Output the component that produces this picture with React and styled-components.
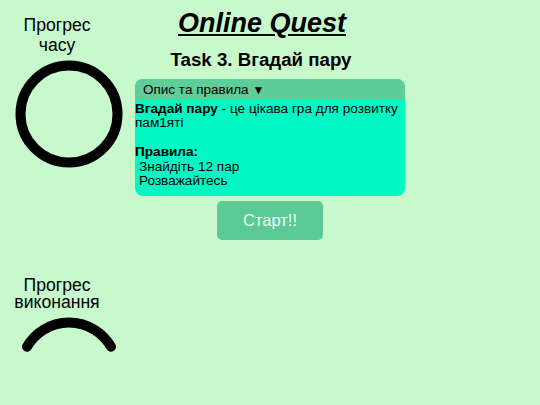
import React from "react"
import styled, { createGlobalStyle } from "styled-components"

const GlobalStyle = createGlobalStyle`
  html, body {
    margin: 0;
    padding: 0;
    background: #c8f9cc;
    font-family: "Liberation Sans", Arial, sans-serif;
    color: #000;
  }
`

const Page = styled.div`
  width: 540px;
  height: 405px;
  overflow: hidden;
  display: grid;
  grid-template-columns: 135px 270px 1fr;
`

const Sidebar = styled.div`
  display: flex;
  flex-direction: column;
`

const GaugeLabel = styled.div`
  width: 114px;
  margin-top: ${props => props.top || "0px"};
  text-align: center;
  font-size: 17.6px;
  line-height: ${props => props.lh || "20px"};
`

const GaugeSvg = styled.svg`
  display: block;
  margin-left: 15px;
  margin-top: ${props => props.top || "0px"};
`

const Main = styled.div`
  display: flex;
  flex-direction: column;
  align-items: center;
`

const Title = styled.h1`
  margin: 8px 16px 0 0;
  font-size: 27px;
  line-height: 31px;
  font-weight: bold;
  font-style: italic;
  text-decoration: underline;
`

const Subtitle = styled.h3`
  margin: 10px 18px 0 0;
  font-size: 18.7px;
  line-height: 22px;
  font-weight: bold;
`

const Rules = styled.div`
  width: 270px;
  margin-top: 8px;
  border-radius: 8px;
  overflow: hidden;
  background: #03f7c3;
`

const RulesHeader = styled.div`
  height: 21px;
  padding-left: 8px;
  display: flex;
  align-items: center;
  gap: 4px;
  background: #5fcd99;
  font-size: 13.5px;
`

const Arrow = styled.span`
  font-size: 12px;
`

const RulesBody = styled.div`
  padding: 2px 0 8px 0;
  font-size: 13.6px;
  line-height: 14.4px;
`

const Line = styled.div`
  min-height: 14.4px;
  white-space: nowrap;
  padding-left: ${props => (props.indent ? "4px" : "0")};
`

const StartButton = styled.button`
  margin-top: 5px;
  width: 106px;
  height: 39px;
  border: none;
  border-radius: 5px;
  background: #5bca97;
  color: #f2fff7;
  font-family: "Liberation Sans", Arial, sans-serif;
  font-size: 16.5px;
  cursor: pointer;
`

const TimeGauge = () => (
  <GaugeSvg top="5px" width="108" height="108" viewBox="0 0 108 108">
    <circle cx="54" cy="54" r="48.5" fill="none" stroke="#000" strokeWidth="10" />
  </GaugeSvg>
)

const DoneGauge = () => (
  <GaugeSvg top="5px" width="108" height="46" viewBox="0 0 108 46">
    <path
      d="M12 29.75 A48.5 48.5 0 0 1 96 29.75"
      fill="none"
      stroke="#000"
      strokeWidth="10"
      strokeLinecap="round"
    />
  </GaugeSvg>
)

export default function App() {
  return (
    <>
      <GlobalStyle />
      <Page>
        <Sidebar>
          <GaugeLabel top="14.5px">
            Прогрес
            <br />
            часу
          </GaugeLabel>
          <TimeGauge />
          <GaugeLabel top="109px" lh="17.5px">
            Прогрес
            <br />
            виконання
          </GaugeLabel>
          <DoneGauge />
        </Sidebar>
        <Main>
          <Title>Online Quest</Title>
          <Subtitle>Task 3. Вгадай пару</Subtitle>
          <Rules>
            <RulesHeader>
              Опис та правила <Arrow>▼</Arrow>
            </RulesHeader>
            <RulesBody>
              <Line>
                <b>Вгадай пару</b> - це цікава гра для розвитку
              </Line>
              <Line>пам1яті</Line>
              <Line />
              <Line>
                <b>Правила:</b>
              </Line>
              <Line indent>Знайдіть 12 пар</Line>
              <Line indent>Розважайтесь</Line>
            </RulesBody>
          </Rules>
          <StartButton>Старт!!</StartButton>
        </Main>
      </Page>
    </>
  )
}
